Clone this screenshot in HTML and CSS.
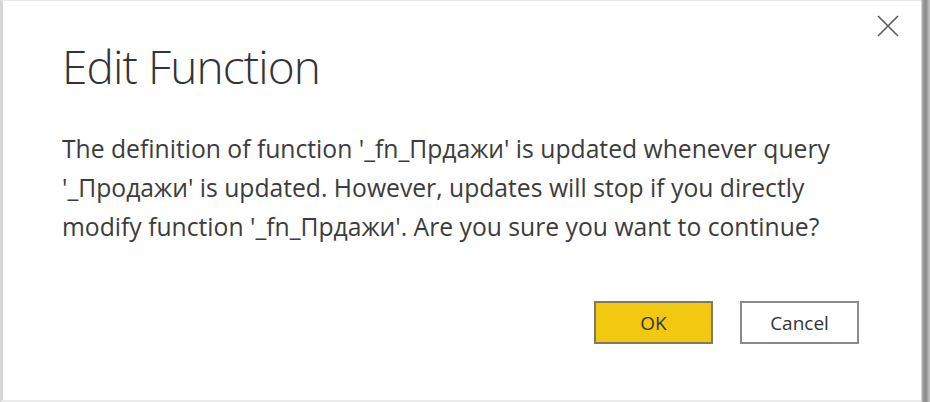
FILE: index.html
```html
<!DOCTYPE html>
<html lang="en">
<head>
    <meta charset="UTF-8">
    <title>Edit Function</title>
    <link rel="stylesheet" href="styles.css">
</head>
<body>
    <div class="window">
        <div class="dialog">
            <button class="close" title="Close">
                <svg width="22" height="22" viewBox="0 0 22 22">
                    <path d="M1 1 L21 21 M21 1 L1 21" stroke="#5e5e5e" stroke-width="1.7" fill="none"/>
                </svg>
            </button>
            <h1 class="title">Edit Function</h1>
            <p class="message">The definition of function '_fn_Прдажи' is updated whenever query '_Продажи' is updated. However, updates will stop if you directly modify function '_fn_Прдажи'. Are you sure you want to continue?</p>
            <div class="buttons">
                <button class="btn btn-ok">OK</button>
                <button class="btn btn-cancel">Cancel</button>
            </div>
        </div>
        <div class="edge"></div>
    </div>
</body>
</html>
```

FILE: styles.css
```css
html, body {
    margin: 0;
    padding: 0;
    height: 100%;
    background: #fff;
    font-family: 'Open Sans', 'Noto Sans', sans-serif;
    color: #333;
}
.window {
    display: flex;
    height: 100%;
}
.dialog {
    position: relative;
    flex: 1;
    background: #fff;
    border-left: 3px solid #d6d6d6;
    border-top: 1px solid #e8e8e8;
    border-bottom: 2px solid #ececec;
    padding: 0 0 0 59px;
}
.edge {
    width: 9px;
    background: linear-gradient(to right, #e4e4e4 0, #9a9a9a 2px, #8a8a8a 5px, #c9c9c9 9px);
}
.close {
    position: absolute;
    top: 14px;
    right: 22px;
    border: none;
    background: none;
    padding: 0;
    width: 22px;
    height: 22px;
    cursor: pointer;
}
.title {
    margin: 34px 0 0;
    font-size: 46px;
    font-weight: 300;
    line-height: 63px;
    letter-spacing: -0.9px;
    color: #333;
}
.message {
    margin: 31px 0 0;
    width: 790px;
    font-size: 24.7px;
    line-height: 39px;
    color: #3c3c3c;
}
.buttons {
    display: flex;
    gap: 27px;
    margin: 55px 0 0 532px;
}
.btn {
    width: 119px;
    height: 43px;
    padding: 0;
    font-family: 'Open Sans', 'Noto Sans', sans-serif;
    font-size: 19px;
    color: #333;
    border: 2px solid #8a8a8a;
    cursor: pointer;
}
.btn-ok {
    background: #f2c811;
    border-color: #7f7a63;
}
.btn-cancel {
    background: #fff;
}
```
